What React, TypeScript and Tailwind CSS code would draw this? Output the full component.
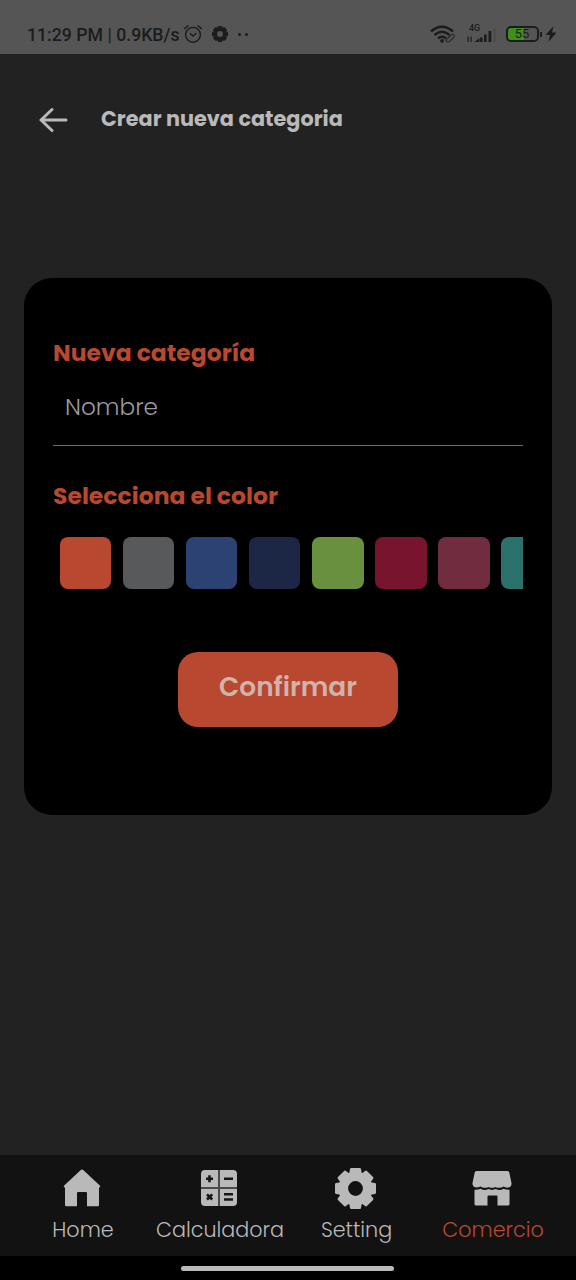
import type { ReactNode } from "react";

const swatches = [
  { name: "Naranja", tone: "bg-[#b8482f]" },
  { name: "Gris", tone: "bg-[#58595b]" },
  { name: "Azul", tone: "bg-[#2c4272]" },
  { name: "Marino", tone: "bg-[#1b2744]" },
  { name: "Verde", tone: "bg-[#69903f]" },
  { name: "Carmesí", tone: "bg-[#79142f]" },
  { name: "Vino", tone: "bg-[#712c40]" },
  { name: "Turquesa", tone: "bg-[#2b716c]" },
];

const gearTeeth = [0, 45, 90, 135, 180, 225, 270, 315];

function Gear({ className }: { className: string }) {
  return (
    <svg viewBox="0 0 40 40" className={className} fill="currentColor">
      {gearTeeth.map((angle) => (
        <path key={angle} d="M15.8 0h8.400q1 0 1.200 1l1.100 8H13.500l1.100-8q.2-1 1.200-1Z" transform={`rotate(${angle} 20 20)`} />
      ))}
      <path fillRule="evenodd" d="M20 3.300a16.700 16.700 0 1 0 0 33.400 16.700 16.700 0 0 0 0-33.400Zm0 9.500a7.200 7.200 0 1 1 0 14.400 7.200 7.200 0 0 1 0-14.400Z" />
    </svg>
  );
}

function StatusBar() {
  return (
    <div className="flex h-[54px] shrink-0 items-start bg-[#555555] pt-[24px] pl-[27px] font-['Roboto',sans-serif] text-[#1c1c1c]">
      <div className="h-5 w-[153px] text-[17.700px] leading-[22px] font-medium whitespace-nowrap">
        11:29 PM <span className="font-normal">|</span> 0.9KB/s
      </div>
      <svg viewBox="0 0 20 20" className="ml-[3px] h-5 w-5" fill="none" stroke="currentColor" strokeWidth="1.4" strokeLinecap="round">
        <circle cx="10" cy="10.8" r="7.4" />
        <path d="M7.4 9.8 10 12l3-2.5M1.6 4.6 5 1.8M18.4 4.6 15 1.8" />
      </svg>
      <Gear className="mt-[2px] ml-[9px] h-4 w-4" />
      <div className="mt-[9px] ml-[10px] flex gap-[4px]">
        <i className="h-[3px] w-[3px] rounded-full bg-current" />
        <i className="h-[3px] w-[3px] rounded-full bg-current" />
      </div>
      <svg viewBox="0 0 26 20" className="ml-[182px] h-5 w-[26px]" fill="none" stroke="currentColor" strokeWidth="2.400">
        <path d="M1 7.500Q12 -2 23 7.500M4.500 11Q12 4.500 19.500 11M8 14.500Q12 11 16 14.500" />
        <circle cx="12" cy="16.800" r="1.900" fill="currentColor" stroke="none" />
        <path strokeWidth="1.200" fill="#555" d="m17 15 4-4q2-1.500 3 0t-.5 2.500l-4 4q-1.800 1-2.800 0t.3-2.500l3-2.800" stroke="#2b2b2b" />
      </svg>
      <div className="-mt-px ml-[10px] flex h-5 w-[32px] flex-col">
        <span className="pl-[3px] text-[9px] leading-[10px] font-medium">4G</span>
        <svg viewBox="0 0 32 16" className="-mt-[6px] h-4 w-8 shrink-0" fill="currentColor">
          <path d="M1.500 9.500h1.200V15H1.500zM4.500 9.500h1.200V15H4.500zM14 10.500h2.600V15H14zM18 7.500h2.600V15H18zM22.500 4h2.800v11h-2.800zM8.500 15l5-4v4z" />
          <path fill="#484848" d="M28 1h1.300v14H28z" />
        </svg>
      </div>
      <div className="mt-[2px] ml-[8px] flex h-4 w-[33px] items-center rounded-[5px] border-2 border-[#1c1c1c] bg-[linear-gradient(90deg,#3e8f1c_55%,#555555_55%)] text-[13px] leading-3">
        <span className="w-full pr-px text-center">55</span>
      </div>
      <i className="mt-[8px] ml-px h-[5px] w-[2px] bg-current" />
      <svg viewBox="0 0 12 16" className="mt-[2px] ml-[3px] h-4 w-3" fill="currentColor">
        <path d="M8.500 0 .5 9H5l-1.500 7L11.500 6.500H7z" />
      </svg>
    </div>
  );
}

function HomeIcon() {
  return (
    <svg viewBox="0 0 38 40" className="h-10 w-[38px]" fill="currentColor">
      <path d="M19 1.500q.8 0 1.500.8L36.800 17.500q1.200 1.500-.8 1.900V37q0 1.300-1.300 1.300H24V25q0-1-1-1h-8q-1 0-1 1v13.300H3.300Q2 38.300 2 37V19.400q-2-.4-.8-1.900L17.500 2.300Q18.200 1.500 19 1.500Z" />
    </svg>
  );
}

function CalculatorIcon() {
  return (
    <svg viewBox="0 0 38 40" className="h-10 w-[38px]">
      <rect x="1" y="2" width="36" height="36" rx="4" fill="currentColor" />
      <path stroke="#161616" strokeWidth="2.600" fill="none" d="M9.500 7.300v7M6 10.800h7M24 10.800h9M7 26.300l5.200 5.200M12.200 26.300 7 31.500M24 26.300h9M24 31.500h9" />
      <path stroke="#4a4a4a" strokeWidth="2" d="M1 20h36M19 2v36" />
    </svg>
  );
}

function StoreIcon() {
  return (
    <svg viewBox="0 0 40 40" className="h-10 w-10" fill="currentColor">
      <path d="M4.500 3h31q1.500 0 1.800 1.500l2.200 10.500q.4 4-3.700 4.600-2.500.2-4.300-1-1.900 1.300-4.500 1.200-2 0-3.500-.9-1.500.9-3.500.9t-3.500-.9q-1.500.9-3.500.9-2.700.1-4.500-1.200Q6.500 19.600 4 19.600.100 18.500.5 15L2.700 4.500Q3 3 4.500 3Z" />
      <path d="M2.500 21.700q3.500.2 6-1 2.500 1.400 5 1.200 1.800 0 3-.8 1.500.8 3.500.8t3.500-.8q1.500.8 3.500.8 2.500.100 4.500-1.200 2.500 1.200 6 1V36q0 1.500-1.500 1.500H25.500v-9q0-1-1-1h-8q-1 0-1 1v9H4q-1.500 0-1.500-1.500Z" />
    </svg>
  );
}

function Tab({ icon, label, width, text }: { icon: ReactNode; label: string; width: string; text: string }) {
  return (
    <button className={`flex flex-col items-center ${width}`}>
      <span className="flex h-[42px] items-center pr-px text-[#b9b9b9]">{icon}</span>
      <span className={`mt-[6px] pl-px leading-[30px] font-light whitespace-nowrap ${text}`}>{label}</span>
    </button>
  );
}

export default function App() {
  return (
    <div className="flex h-[1280px] w-[576px] flex-col overflow-hidden bg-[#222222] font-['Poppins','Inter',sans-serif] text-[#b9b9b9]">
      <StatusBar />
      <header className="flex h-[224px] shrink-0 items-start pt-[48px] pl-[39px]">
        <svg viewBox="0 0 30 36" className="h-9 w-[30px]" fill="none" stroke="currentColor" strokeWidth="3" strokeLinecap="round" strokeLinejoin="round">
          <path d="M13 7.500 2 18l11 10.500M2 18h25" />
        </svg>
        <h1 className="ml-[32px] text-[20.800px] leading-[34px] font-bold whitespace-nowrap">Crear nueva categoria</h1>
      </header>
      <main className="mx-6 h-[537px] shrink-0 rounded-[28px] bg-black px-[29px] pt-[58px]">
        <h2 className="text-[23.500px] leading-[34px] font-bold whitespace-nowrap text-[#b8482f]">Nueva categoría</h2>
        <input
          type="text"
          placeholder="Nombre"
          className="mt-[1px] block h-[75px] w-full border-b border-[#6b6b6b] bg-transparent px-3 pb-[2px] text-[23.200px] font-light outline-none placeholder:text-[#9c9c9c]"
        />
        <h2 className="mt-[33px] text-[23.500px] leading-[34px] font-bold whitespace-nowrap text-[#b8482f]">Selecciona el color</h2>
        <div className="mt-[24px] flex gap-[11.700px] overflow-hidden pl-[6.800px]">
          {swatches.map((swatch) => (
            <button key={swatch.name} aria-label={swatch.name} className={`h-[52px] w-[51.400px] shrink-0 rounded-[8px] ${swatch.tone}`} />
          ))}
        </div>
        <button className="mx-auto mt-[63px] block h-[75px] w-[220px] rounded-[20px] bg-[#b8482f] pb-[5px] text-[26.400px] font-semibold text-[#cfb3ac]">
          Confirmar
        </button>
      </main>
      <nav className="mt-auto flex h-[101px] shrink-0 bg-[#121212] pt-[12px] pl-[14px]">
        <Tab icon={<HomeIcon />} label="Home" width="w-[137px]" text="text-[20.700px]" />
        <Tab icon={<CalculatorIcon />} label="Calculadora" width="w-[137px]" text="text-[20.700px]" />
        <Tab icon={<Gear className="h-[41px] w-[41px]" />} label="Setting" width="w-[136px]" text="text-[20.700px]" />
        <Tab icon={<StoreIcon />} label="Comercio" width="w-[137px]" text="text-[20.700px] text-[#b8482f]" />
      </nav>
      <div className="flex h-6 shrink-0 justify-center bg-black pt-[10px]">
        <div className="mr-px h-[5px] w-[213px] rounded-full bg-[#b9b9b9]" />
      </div>
    </div>
  );
}
